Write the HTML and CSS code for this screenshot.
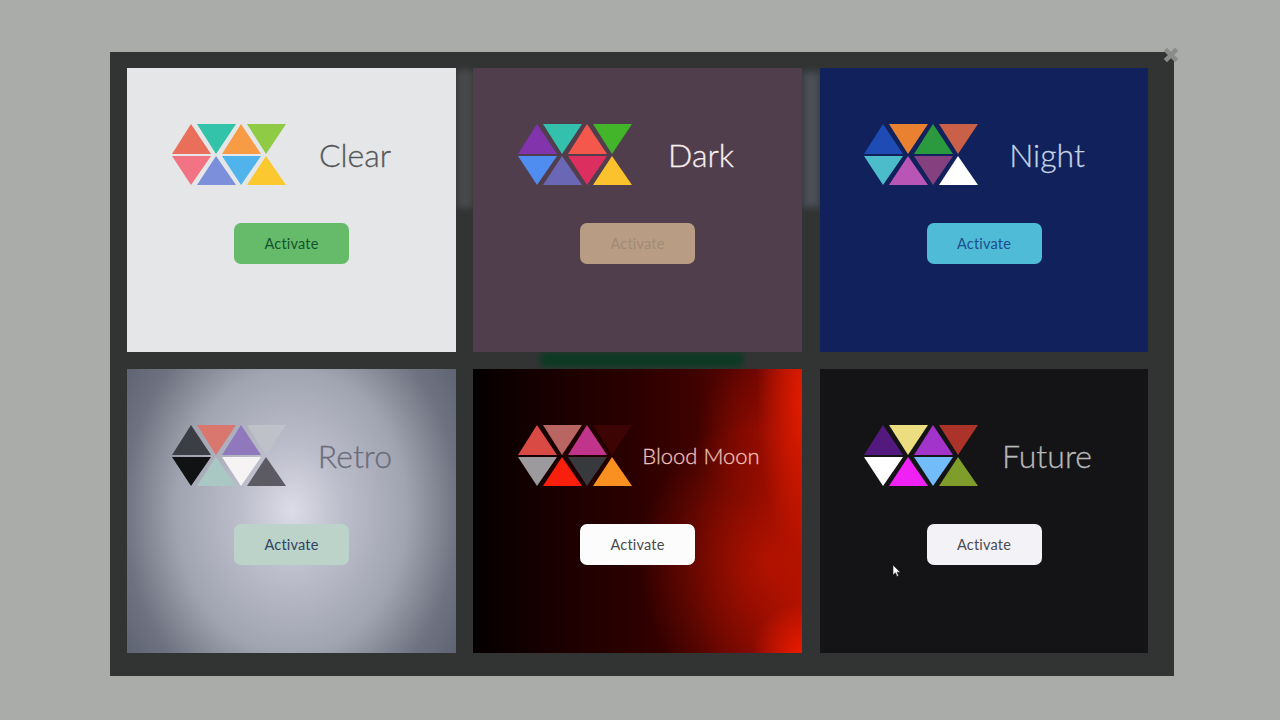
FILE: index.html
```html
<!DOCTYPE html>
<html lang="en">
<head>
<meta charset="UTF-8" />
<meta name="viewport" content="width=device-width, initial-scale=1" />
<title>Themes</title>
<link rel="stylesheet" href="styles.css">
</head>
<body>

<div class="modal">
  <div class="smear smear-left"></div>
  <div class="smear smear-right"></div>
  <div class="smear smear-green"></div>

  <svg class="close" viewBox="0 0 16 16"><path d="M3 3 L13 13 M13 3 L3 13"/></svg>

  <div class="themes">

    <div class="card clear">
      <div class="top">
        <svg class="logo" viewBox="0 0 115 63">
          <polygon class="t1" points="20,1 40,31 1,31"/>
          <polygon class="t2" points="26,1 65,1 45,31"/>
          <polygon class="t3" points="70,1 90,31 51,31"/>
          <polygon class="t4" points="76,1 115,1 95,31"/>
          <polygon class="t5" points="1,33 40,33 20,62"/>
          <polygon class="t6" points="45,33 65,62 26,62"/>
          <polygon class="t7" points="51,33 90,33 70,62"/>
          <polygon class="t8" points="95,33 115,62 76,62"/>
        </svg>
        <div class="name">Clear</div>
      </div>
      <button class="activate">Activate</button>
    </div>

    <div class="card dark">
      <div class="top">
        <svg class="logo" viewBox="0 0 115 63">
          <polygon class="t1" points="20,1 40,31 1,31"/>
          <polygon class="t2" points="26,1 65,1 45,31"/>
          <polygon class="t3" points="70,1 90,31 51,31"/>
          <polygon class="t4" points="76,1 115,1 95,31"/>
          <polygon class="t5" points="1,33 40,33 20,62"/>
          <polygon class="t6" points="45,33 65,62 26,62"/>
          <polygon class="t7" points="51,33 90,33 70,62"/>
          <polygon class="t8" points="95,33 115,62 76,62"/>
        </svg>
        <div class="name">Dark</div>
      </div>
      <button class="activate">Activate</button>
    </div>

    <div class="card night">
      <div class="top">
        <svg class="logo" viewBox="0 0 115 63">
          <polygon class="t1" points="20,1 40,31 1,31"/>
          <polygon class="t2" points="26,1 65,1 45,31"/>
          <polygon class="t3" points="70,1 90,31 51,31"/>
          <polygon class="t4" points="76,1 115,1 95,31"/>
          <polygon class="t5" points="1,33 40,33 20,62"/>
          <polygon class="t6" points="45,33 65,62 26,62"/>
          <polygon class="t7" points="51,33 90,33 70,62"/>
          <polygon class="t8" points="95,33 115,62 76,62"/>
        </svg>
        <div class="name">Night</div>
      </div>
      <button class="activate">Activate</button>
    </div>

    <div class="card retro">
      <div class="top">
        <svg class="logo" viewBox="0 0 115 63">
          <polygon class="t1" points="20,1 40,31 1,31"/>
          <polygon class="t2" points="26,1 65,1 45,31"/>
          <polygon class="t3" points="70,1 90,31 51,31"/>
          <polygon class="t4" points="76,1 115,1 95,31"/>
          <polygon class="t5" points="1,33 40,33 20,62"/>
          <polygon class="t6" points="45,33 65,62 26,62"/>
          <polygon class="t7" points="51,33 90,33 70,62"/>
          <polygon class="t8" points="95,33 115,62 76,62"/>
        </svg>
        <div class="name">Retro</div>
      </div>
      <button class="activate">Activate</button>
    </div>

    <div class="card blood">
      <div class="top">
        <svg class="logo" viewBox="0 0 115 63">
          <polygon class="t1" points="20,1 40,31 1,31"/>
          <polygon class="t2" points="26,1 65,1 45,31"/>
          <polygon class="t3" points="70,1 90,31 51,31"/>
          <polygon class="t4" points="76,1 115,1 95,31"/>
          <polygon class="t5" points="1,33 40,33 20,62"/>
          <polygon class="t6" points="45,33 65,62 26,62"/>
          <polygon class="t7" points="51,33 90,33 70,62"/>
          <polygon class="t8" points="95,33 115,62 76,62"/>
        </svg>
        <div class="name">Blood Moon</div>
      </div>
      <button class="activate">Activate</button>
    </div>

    <div class="card future">
      <div class="top">
        <svg class="logo" viewBox="0 0 115 63">
          <polygon class="t1" points="20,1 40,31 1,31"/>
          <polygon class="t2" points="26,1 65,1 45,31"/>
          <polygon class="t3" points="70,1 90,31 51,31"/>
          <polygon class="t4" points="76,1 115,1 95,31"/>
          <polygon class="t5" points="1,33 40,33 20,62"/>
          <polygon class="t6" points="45,33 65,62 26,62"/>
          <polygon class="t7" points="51,33 90,33 70,62"/>
          <polygon class="t8" points="95,33 115,62 76,62"/>
        </svg>
        <div class="name">Future</div>
      </div>
      <button class="activate">Activate</button>
    </div>

  </div>

  <svg class="cursor" viewBox="0 0 10 14"><path d="M1 1 L1 11 L3.4 8.8 L5 12.4 L6.6 11.7 L5 8.2 L8.2 8.2 Z"/></svg>
</div>

</body>
</html>
```

FILE: styles.css
```css
html, body { height: 100%; }
body { margin: 0; background: #aaacaa; font-family: Lato, sans-serif; overflow: hidden; }

.modal {
  position: relative;
  box-sizing: border-box;
  width: 1064px; height: 624px;
  margin: 52px 0 0 110px;
  padding: 16px 26px 24px 17px;
  background: #323434;
}

.themes {
  position: relative;
  display: grid;
  grid-template-columns: repeat(3, 329px);
  grid-template-rows: repeat(2, 284px);
  gap: 17px;
}

.card { display: flex; flex-direction: column; align-items: center; padding-top: 55px; box-sizing: border-box; }
.top { display: flex; align-items: center; align-self: stretch; padding: 0 32px 0 44px; }
.logo { width: 115px; height: 63px; flex: none; }
.name { flex: 1; text-align: center; font-size: 32px; font-weight: 300; -webkit-text-stroke: 0.3px; white-space: nowrap; }

.activate {
  width: 115px; height: 41px;
  margin-top: 37px;
  border: 0; border-radius: 7px;
  font-family: Lato, sans-serif; font-size: 14.5px; letter-spacing: 0.2px;
}

/* video smears around the dark card */
.smear { position: absolute; filter: blur(3px); }
.smear-left { left: 347px; top: 18px; width: 16px; height: 138px; background: #47494a; }
.smear-right { left: 693px; top: 20px; width: 17px; height: 135px; background: #4a4f56; }
.smear-green { left: 431px; top: 300px; width: 202px; height: 15px; background: #0c3a24; }

.close { position: absolute; left: 1052px; top: -6px; width: 18px; height: 18px; }
.close path { fill: none; stroke: #8a8c8a; stroke-width: 4; }

.cursor { position: absolute; left: 782px; top: 512px; width: 10px; height: 14px; }
.cursor path { fill: #fff; stroke: #222; stroke-width: 0.6; }

/* third column sits a pixel further right, its content does not */
.night, .future { margin-left: 1px; }
.night .top, .future .top { padding-left: 43px; }

/* clear */
.clear { background: #e4e6e7; }
.clear .name { color: #55585a; }
.clear .activate { background: #66bb6a; color: #14532d; }
.clear .t1 { fill: #ea6f5a; }
.clear .t2 { fill: #33c3aa; }
.clear .t3 { fill: #f79b45; }
.clear .t4 { fill: #8fcb45; }
.clear .t5 { fill: #f27484; }
.clear .t6 { fill: #7c8fdb; }
.clear .t7 { fill: #50b3ec; }
.clear .t8 { fill: #fcc82f; }

/* dark */
.dark { background: #503e4c; }
.dark .name { color: #f7f0f2; }
.dark .activate { background: #b89d84; color: #a08a78; }
.dark .t1 { fill: #8234ad; }
.dark .t2 { fill: #33c1ad; }
.dark .t3 { fill: #f4574c; }
.dark .t4 { fill: #43b52a; }
.dark .t5 { fill: #4f8df0; }
.dark .t6 { fill: #6a68b5; }
.dark .t7 { fill: #dc2f5f; }
.dark .t8 { fill: #fcc22e; }

/* night */
.night { background: #10215c; }
.night .name { color: #c5d5e2; }
.night .activate { background: #4fbbd6; color: #1c4f8c; }
.night .t1 { fill: #1e4cb4; }
.night .t2 { fill: #e98130; }
.night .t3 { fill: #2b9a3e; }
.night .t4 { fill: #c96047; }
.night .t5 { fill: #4cbcca; }
.night .t6 { fill: #b956b5; }
.night .t7 { fill: #84407f; }
.night .t8 { fill: #ffffff; }

/* retro */
.retro { background: radial-gradient(ellipse 210px 260px at 50% 50%, #dcdce8 0%, #bcbdca 25%, #a0a4b0 55%, #6e7280 80%, #5a6070 100%); }
.retro .name { color: #6a6d7c; }
.retro .activate { background: #bcd3ca; color: #2f4460; }
.retro .t1 { fill: #3b3f45; }
.retro .t2 { fill: #d9776e; }
.retro .t3 { fill: #8f78bc; }
.retro .t4 { fill: #bec2c8; }
.retro .t5 { fill: #111214; }
.retro .t6 { fill: #a9c8c4; }
.retro .t7 { fill: #f6f3f5; }
.retro .t8 { fill: #5c5a62; }

/* blood moon */
.blood {
  background:
    radial-gradient(circle 50px at 100% 100%, #e81a00 0%, rgba(232,26,0,0) 100%),
    radial-gradient(ellipse 45px 150px at 100% 12%, #e01c00 0%, rgba(224,28,0,0) 100%),
    radial-gradient(ellipse 60px 70px at 86% 22%, rgba(176,16,0,0.45) 0%, rgba(176,16,0,0) 100%),
    radial-gradient(ellipse 130px 150px at 90% 68%, rgba(190,20,0,0.8) 0%, rgba(190,20,0,0) 100%),
    linear-gradient(90deg, #040000 0%, #1a0000 25%, #2c0000 50%, #3e0200 68%, #6a0600 85%, #a81000 100%);
}
.blood .name { color: #eec0b8; font-size: 22px; }
.blood .activate { background: #fdfcfc; color: #4a4a4c; }
.blood .t1 { fill: #d94a45; }
.blood .t2 { fill: #b96663; }
.blood .t3 { fill: #c0348c; }
.blood .t4 { fill: #3c0503; }
.blood .t5 { fill: #9c9a9c; }
.blood .t6 { fill: #f8200c; }
.blood .t7 { fill: #38393c; }
.blood .t8 { fill: #f9901f; }

/* future */
.future { background: #141416; }
.future .name { color: #b8b8ba; }
.future .activate { background: #f3f2f6; color: #4c4c50; }
.future .t1 { fill: #54197f; }
.future .t2 { fill: #ecdd80; }
.future .t3 { fill: #a234cc; }
.future .t4 { fill: #ab3329; }
.future .t5 { fill: #ffffff; }
.future .t6 { fill: #f021f4; }
.future .t7 { fill: #72bdf9; }
.future .t8 { fill: #7f9d2a; }
```
